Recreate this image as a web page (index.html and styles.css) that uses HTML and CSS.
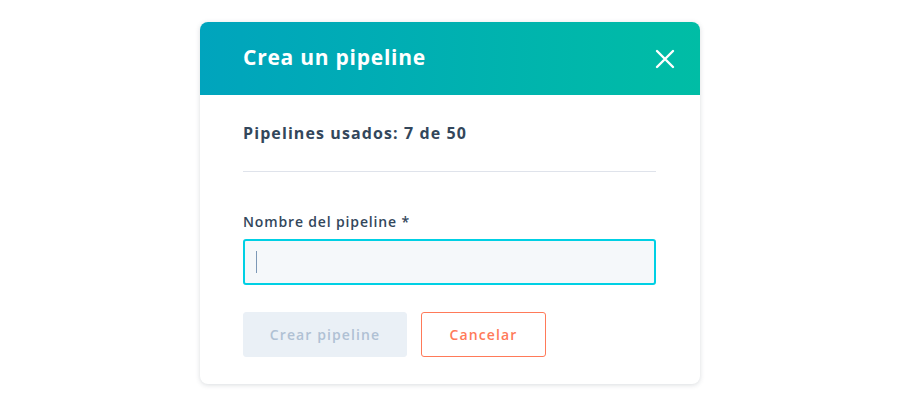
FILE: index.html
```html
<!DOCTYPE html>
<html lang="es">

<head>
    <meta charset="UTF-8">
    <meta name="viewport" content="width=device-width, initial-scale=1.0">
    <title>Crea un pipeline</title>
    <link rel="stylesheet" href="styles.css">
</head>

<body>
    <div class="modal">
        <div class="modal-header">
            <h2>Crea un pipeline</h2>
            <span class="close">
                <svg width="20" height="20" viewBox="0 0 20 20">
                    <path d="M2 2 L18 18 M18 2 L2 18" stroke="#fff" stroke-width="2.4" stroke-linecap="round"/>
                </svg>
            </span>
        </div>
        <div class="modal-body">
            <p class="usage">Pipelines usados: 7 de 50</p>
            <hr>
            <label class="field-label" for="name">Nombre del pipeline *</label>
            <div class="input"><span class="caret"></span></div>
            <div class="actions">
                <button class="btn btn-primary">Crear pipeline</button>
                <button class="btn btn-secondary">Cancelar</button>
            </div>
        </div>
    </div>
</body>

</html>
```

FILE: styles.css
```css
* {
    margin: 0;
    padding: 0;
    box-sizing: border-box;
}
html, body {
    width: 100%;
    height: 100%;
    background-color: #fff;
    font-family: "Open Sans", "Liberation Sans", sans-serif;
    color: #33475b;
}
body {
    padding-top: 22px;
}
.modal {
    width: 500px;
    margin: 0 auto;
    border-radius: 8px;
    background-color: #fff;
    box-shadow: 0 1px 5px rgba(45, 62, 80, 0.18);
    overflow: hidden;
}
.modal-header {
    height: 73px;
    display: flex;
    align-items: center;
    justify-content: space-between;
    padding: 0 25px 3px 43px;
    background: linear-gradient(to right, #00a4bd, #00bda5);
    color: #fff;
}
.modal-header h2 {
    font-size: 21px;
    font-weight: 700;
    letter-spacing: 0.75px;
}
.close {
    display: flex;
    width: 20px;
    height: 20px;
    margin-top: 3px;
}
.modal-body {
    padding: 26px 44px 27px 43px;
}
.usage {
    font-size: 16px;
    font-weight: 700;
    line-height: 24px;
    letter-spacing: 1.1px;
}
hr {
    border: 0;
    border-top: 1px solid #dfe3eb;
    margin: 26px 0 40px;
}
.field-label {
    display: block;
    font-size: 14px;
    font-weight: 600;
    line-height: 20px;
    letter-spacing: 0.85px;
    margin-bottom: 7px;
}
.input {
    height: 46px;
    background-color: #f5f8fa;
    border: 2px solid #00d0e4;
    border-radius: 3px;
    display: flex;
    align-items: center;
    padding-left: 11px;
}
.caret {
    width: 1px;
    height: 22px;
    background-color: #7c98b6;
}
.actions {
    display: flex;
    gap: 14px;
    margin-top: 27px;
}
.btn {
    height: 45px;
    border-radius: 3px;
    font-family: inherit;
    font-size: 14px;
    font-weight: 600;
    letter-spacing: 1.1px;
    background: none;
    border: 1px solid transparent;
}
.btn-primary {
    width: 164px;
    background-color: #eaf0f6;
    border-color: #eaf0f6;
    color: #b0c1d4;
}
.btn-secondary {
    width: 125px;
    border-color: #ff7a59;
    color: #ff7a59;
}
```
